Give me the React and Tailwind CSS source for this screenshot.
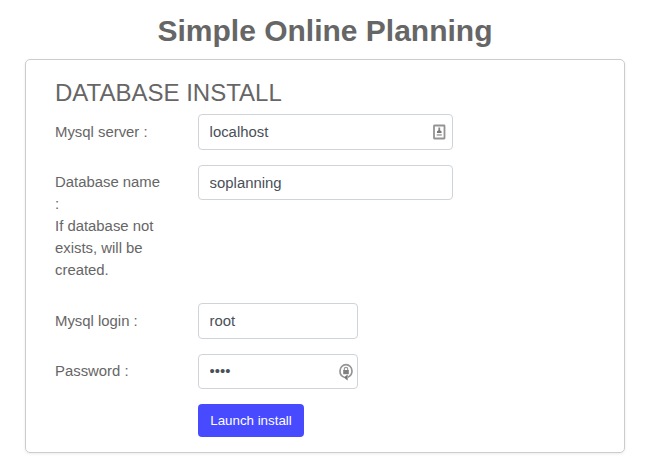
const inputBase =
  "block h-full rounded border border-[#ced4da] bg-white px-[10.6px] text-[14.88px] text-[#495057] outline-none";

function Row({ label, className, labelClass = "pt-[7px]", fieldClass, children }) {
  return (
    <div className={`flex items-start ${className}`}>
      <div className={`w-[113px] shrink-0 leading-[22px] ${labelClass}`}>{label}</div>
      <div className={`relative ml-[30px] ${fieldClass}`}>{children}</div>
    </div>
  );
}

function CardIcon() {
  return (
    <svg className="absolute top-[10px] right-[7px]" width="14" height="16" viewBox="0 0 14 16" fill="none">
      <rect x="2" y="1.5" width="10.5" height="13" rx="0.5" stroke="#939393" strokeWidth="1.8" />
      <path d="M7.25 3.5v4" stroke="#888" strokeWidth="1.8" />
      <path d="M5 9V7.3l2.25-1.3 2.25 1.3V9z" fill="#777" />
      <path d="M4.7 10.9h5.1" stroke="#b5b5b5" strokeWidth="2" />
    </svg>
  );
}

function LockIcon() {
  return (
    <svg className="absolute top-[9px] right-[4px]" width="16" height="18" viewBox="0 0 16 18" fill="none">
      <path d="M6.4 14.3C3.6 13.4 2 11 2 8a6 6.4 0 1 1 12 0c0 2.7-1.6 5.2-4.2 6.2" stroke="#959595" strokeWidth="1.7" />
      <path d="M9.6 11.6v5.8L5.8 14.6z" fill="#777" />
      <path d="M6.3 8V6a1.7 1.7 0 0 1 3.4 0V8" stroke="#999" strokeWidth="1.2" />
      <rect x="5.2" y="7" width="5.6" height="4.2" fill="#808080" />
    </svg>
  );
}

export default function App() {
  return (
    <main className="h-[464px] overflow-hidden bg-white px-[25px] pt-[13px] font-['Liberation_Sans',Arial,sans-serif] text-[14.88px] text-[#666]">
      <h1 className="h-[46px] w-[600px] text-center text-[30px] leading-[36px] font-bold">Simple Online Planning</h1>
      <form
        className="h-[394px] w-[600px] rounded-[5px] border border-[#ccc] px-[29px] pt-[18px] shadow-[0_1px_3px_rgba(0,0,0,0.08)]"
        onSubmit={(e) => e.preventDefault()}
      >
        <h2 className="h-[36px] text-[24px] leading-[29px]">DATABASE INSTALL</h2>
        <Row label="Mysql server :" className="h-[51px]" fieldClass="h-[36px] w-[255px]">
          <input className={`${inputBase} w-full pb-px`} defaultValue="localhost" />
          <CardIcon />
        </Row>
        <Row
          label={
            <>
              Database name
              <br />:<br />
              If database not
              <br />
              exists, will be
              <br />
              created.
            </>
          }
          className="h-[138px]"
          labelClass="pt-[6px]"
          fieldClass="h-[35px] w-[255px]"
        >
          <input className={`${inputBase} w-full`} defaultValue="soplanning" />
        </Row>
        <Row label="Mysql login :" className="h-[51px]" fieldClass="h-[36px] w-[160px]">
          <input className={`${inputBase} w-full pb-px`} defaultValue="root" />
        </Row>
        <Row label="Password :" className="h-[50px]" labelClass="pt-[6px]" fieldClass="h-[35px] w-[160px]">
          <input type="password" className={`${inputBase} w-full pb-px`} defaultValue="root" />
          <LockIcon />
        </Row>
        <button className="ml-[143px] h-[33px] w-[106px] rounded bg-[#484aff] text-[13.33px] text-white">
          Launch install
        </button>
      </form>
    </main>
  );
}
